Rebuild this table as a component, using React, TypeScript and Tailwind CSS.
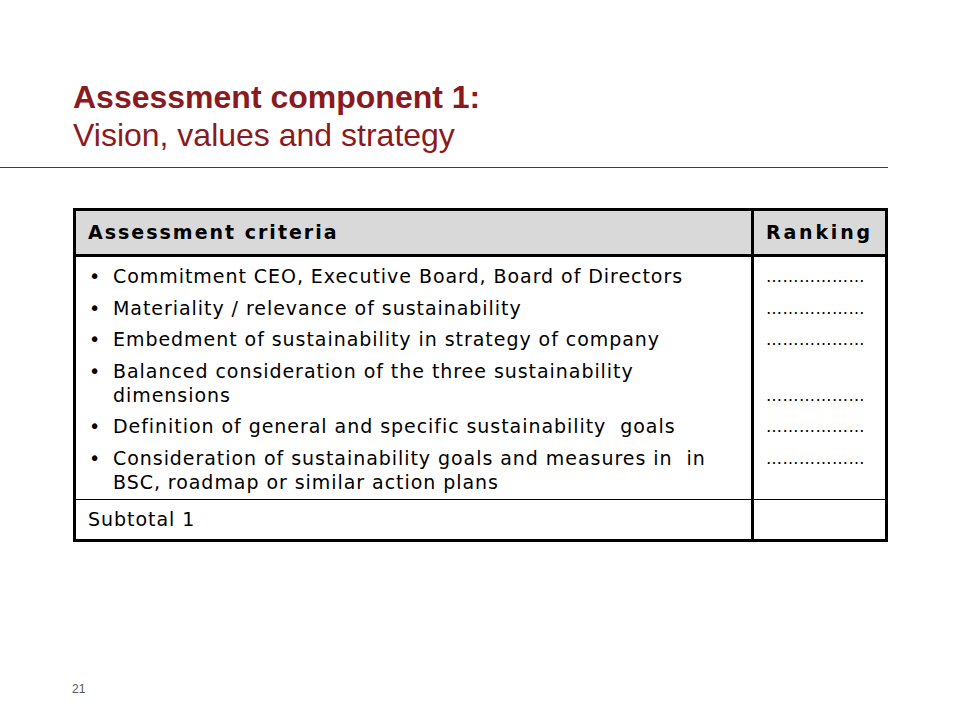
import React from "react";

const items: { lines: string[]; dotLine: number }[] = [
  { lines: ["Commitment CEO, Executive Board, Board of Directors"], dotLine: 0 },
  { lines: ["Materiality / relevance of sustainability"], dotLine: 0 },
  { lines: ["Embedment of sustainability in strategy of company"], dotLine: 0 },
  { lines: ["Balanced consideration of the three sustainability", "dimensions"], dotLine: 1 },
  { lines: ["Definition of general and specific sustainability\u00a0 goals"], dotLine: 0 },
  { lines: ["Consideration of sustainability goals and measures in\u00a0 in", "BSC, roadmap or similar action plans"], dotLine: 0 },
];

const DOTS = "\u2026\u2026\u2026\u2026\u2026\u2026";

export default function App() {
  return (
    <div className="w-[960px] h-[720px] bg-white relative overflow-hidden font-['Liberation_Sans',Arial,sans-serif]">
      <div className="pt-[78px] pl-[73px]">
        <div className="text-[32px] leading-[38px] font-bold text-[#8b1a1f]">Assessment component 1:</div>
        <div className="text-[32px] leading-[38px] text-[#8b1a1f]">Vision, values and strategy</div>
      </div>
      <div className="mt-[13px] w-[888px] h-px bg-[#8b1a1f]" />
      <div className="mt-[40px] ml-[73px] w-[815px] border-[3px] border-black text-black font-['DejaVu_Sans',Verdana,sans-serif]">
        <div className="flex bg-[#d9d9d9] border-b-[3px] border-black h-[46px] text-[19px] font-bold tracking-[2px]">
          <div className="w-[678px] border-r-[3px] border-black pl-[12px] flex items-center">Assessment criteria</div>
          <div className="flex-1 pl-[12px] flex items-center tracking-[2.8px]">Ranking</div>
        </div>
        <div className="flex border-b border-black text-[19px] leading-[24px] tracking-[0.95px]">
          <div className="w-[678px] border-r-[3px] border-black pt-[7px] pb-[5px] flex flex-col gap-[7.5px]">
            {items.map((it, i) => (
              <div key={i} className="flex">
                <div className="w-[37px] pl-[13px] tracking-normal">•</div>
                <div>
                  {it.lines.map((l, j) => (
                    <div key={j} className="whitespace-pre">{l}</div>
                  ))}
                </div>
              </div>
            ))}
          </div>
          <div className="flex-1 pt-[7px] pb-[5px] flex flex-col gap-[7.5px] pl-[12px]">
            {items.map((it, i) => (
              <div key={i}>
                {it.lines.map((_, j) => (
                  <div key={j} className="text-[16px] tracking-[0.5px] h-[24px] leading-[26px]">
                    {j === it.dotLine ? DOTS : "\u00a0"}
                  </div>
                ))}
              </div>
            ))}
          </div>
        </div>
        <div className="flex h-[39px] text-[19px] tracking-[0.95px]">
          <div className="w-[678px] border-r-[3px] border-black pl-[12px] flex items-center">Subtotal 1</div>
          <div className="flex-1" />
        </div>
      </div>
      <div className="absolute left-[72px] top-[680px] text-[12px] text-[#555]">21</div>
    </div>
  );
}
